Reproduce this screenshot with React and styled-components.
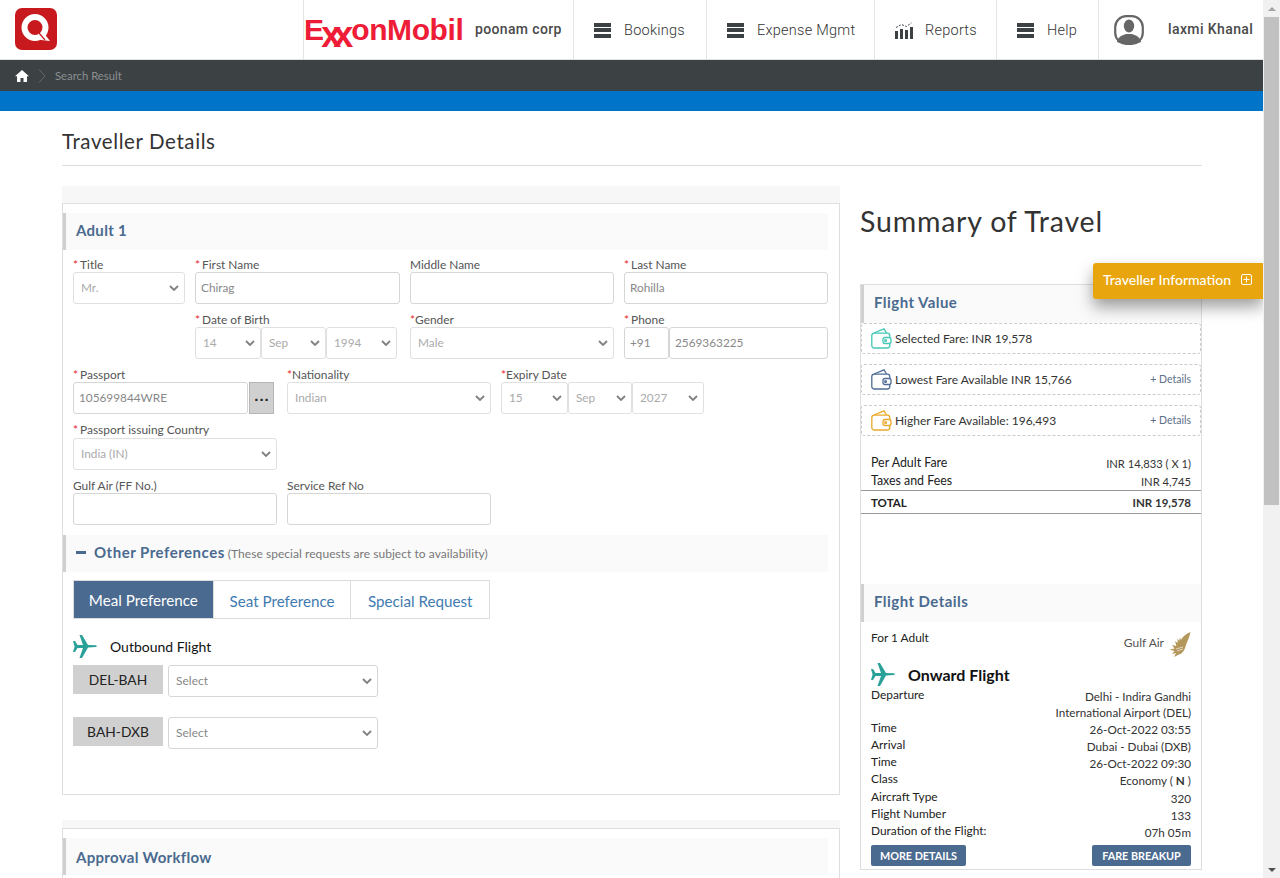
import React from "react";
import styled, { createGlobalStyle } from "styled-components";

const GlobalStyle = createGlobalStyle`
  html, body {
    margin: 0;
    padding: 0;
    height: 878px;
    overflow: hidden;
    background: #fff;
    font-family: "Lato", "Open Sans", sans-serif;
    color: #333;
  }
  * { box-sizing: border-box; }
`;

const chevron =
  "url(\"data:image/svg+xml,%3Csvg xmlns='http://www.w3.org/2000/svg' width='10' height='6' viewBox='0 0 10 6'%3E%3Cpath d='M1 1l4 4 4-4' fill='none' stroke='%23808080' stroke-width='1.8'/%3E%3C/svg%3E\")";

const Page = styled.div`
  display: flex;
  width: 1280px;
  height: 878px;
  overflow: hidden;
`;

const Main = styled.div`
  position: relative;
  width: 1263px;
  height: 878px;
  overflow: hidden;
`;

const Scrollbar = styled.div`
  width: 17px;
  height: 878px;
  background: #f1f1f1;
  display: flex;
  flex-direction: column;
  align-items: center;
`;

const ScrollArrow = styled.div`
  width: 17px;
  height: 17px;
  flex: none;
  display: flex;
  align-items: center;
  justify-content: center;
  margin-top: ${(p) => (p.$bottom ? "auto" : "0")};
  &::before {
    content: "";
    border-left: 4px solid transparent;
    border-right: 4px solid transparent;
    border-${(p) => (p.$bottom ? "top" : "bottom")}: 4px solid ${(p) => (p.$bottom ? "#505050" : "#a3a3a3")};
  }
`;

const ScrollThumb = styled.div`
  width: 15px;
  height: 488px;
  background: #c1c1c1;
`;

const Header = styled.header`
  display: flex;
  align-items: stretch;
  height: 60px;
  background: #fff;
  border-bottom: 1px solid #e2e2e2;
`;

const LogoSlot = styled.div`
  width: 303px;
  padding: 8px 0 0 15px;
`;

const BrandCell = styled.div`
  display: flex;
  align-items: center;
  width: 270px;
  border-left: 1px solid #e4e4e4;
`;

const ExxonText = styled.div`
  font-family: "Liberation Sans", Arial, sans-serif;
  font-weight: 700;
  font-size: 30px;
  letter-spacing: -0.4px;
  color: #ee1c36;
  width: 171px;
  white-space: nowrap;
  line-height: 1;
`;

const CrossX = styled.span`
  display: inline-block;
  margin: 0 ${(p) => p.$mr}px 0 ${(p) => p.$ml}px;
  transform: translateY(5px) scale(1.2);
`;

const CorpName = styled.span`
  font-family: "Roboto", sans-serif;
  font-size: 14px;
  font-weight: 500;
  letter-spacing: 0.35px;
  color: #4a4a4a;
  margin-top: -2px;
`;

const NavCell = styled.div`
  display: flex;
  align-items: center;
  width: ${(p) => p.$w}px;
  padding: 1px 0 0 ${(p) => p.$pl}px;
  gap: ${(p) => p.$gap}px;
  border-left: 1px solid #e4e4e4;
  font-family: "Roboto", sans-serif;
  font-size: 14.5px;
  font-weight: 300;
  letter-spacing: 0.25px;
  color: #333;
`;

const Burger = styled.span`
  display: flex;
  flex-direction: column;
  justify-content: space-between;
  width: 17px;
  height: 15px;
  span {
    display: block;
    height: 4px;
    background: #3c4144;
  }
`;

const UserName = styled.span`
  font-size: 14px;
  font-weight: 500;
  letter-spacing: 0.4px;
  color: #4a4a4a;
  margin-left: 24px;
  margin-top: -2px;
`;

const CrumbBar = styled.div`
  display: flex;
  align-items: center;
  height: 31px;
  padding-left: 15px;
  gap: 9px;
  background: #3c4144;
  font-size: 11.3px;
  color: #8b8f91;
`;

const BlueBar = styled.div`
  height: 20px;
  background: #0074c8;
`;

const Content = styled.main`
  padding: 0 61px 0 62px;
`;

const PageTitle = styled.h1`
  margin: 0;
  height: 55px;
  padding-top: 17px;
  border-bottom: 1px solid #dcdcdc;
  font-size: 20.5px;
  line-height: 26px;
  font-weight: 400;
  letter-spacing: 0.6px;
  color: #333;
`;

const Columns = styled.div`
  display: flex;
  gap: 20px;
  margin-top: 20px;
`;

const LeftCol = styled.div`
  width: 778px;
  flex: none;
`;

const RightCol = styled.div`
  width: 342px;
  flex: none;
`;

const CardStrip = styled.div`
  height: ${(p) => p.$h}px;
  background: #f7f7f7;
`;

const Card = styled.section`
  border: 1px solid #dedede;
  height: ${(p) => p.$h}px;
  padding-top: 9px;
  background: #fff;
  margin-bottom: 25px;
`;

const SectionHead = styled.div`
  display: flex;
  align-items: center;
  height: 37px;
  width: 765px;
  padding: 0 0 3px 10px;
  border-left: 3px solid #d0d0d0;
  background: #fafafa;
  font-size: 15px;
  font-weight: 700;
  letter-spacing: 0.3px;
  color: #4a6a8f;
`;

const ApprovalHead = styled(SectionHead)`
  padding-bottom: 0;
`;

const FormBody = styled.div`
  padding: 7px 0 0 10px;
`;

const FormRow = styled.div`
  display: flex;
  gap: 10px;
  margin-bottom: ${(p) => p.$mb ?? 8}px;
`;

const Field = styled.div`
  width: ${(p) => p.$w}px;
  flex: none;
`;

const Label = styled.label`
  display: block;
  height: ${(p) => p.$h ?? 15}px;
  font-size: 11.9px;
  line-height: 15px;
  color: #555;
  white-space: nowrap;
`;

const Req = styled.span`
  color: #e8262b;
  margin-right: ${(p) => p.$gap ?? 2}px;
`;

const Input = styled.input`
  display: block;
  width: ${(p) => p.$w ?? "100%"};
  height: 32px;
  padding: 0 5px 1px;
  border: 1px solid #d6d6d6;
  border-radius: 3px;
  background: #fff;
  font-family: inherit;
  font-size: 11.8px;
  color: #888;
  outline: none;
`;

const Select = styled.select`
  display: block;
  appearance: none;
  width: ${(p) => p.$w ?? "100%"};
  height: 32px;
  padding: 0 16px 1px 7px;
  border: 1px solid ${(p) => (p.$strong ? "#d6d6d6" : "#e0e0e0")};
  border-radius: 3px;
  background: #fff ${chevron} no-repeat right 5px center;
  font-family: inherit;
  font-size: ${(p) => (p.$strong ? "12px" : "11.8px")};
  color: ${(p) => (p.$strong ? "#888" : "#aaa")};
  outline: none;
`;

const Inline = styled.div`
  display: flex;
  gap: ${(p) => p.$gap ?? 1}px;
`;

const DotsButton = styled.button`
  width: 25px;
  height: 32px;
  padding: 0 0 5px 1px;
  flex: none;
  border: 1px solid #b5b5b5;
  background: #d0d0d0;
  color: #222;
  font-size: 15px;
  font-weight: 700;
  line-height: 1;
  letter-spacing: 1px;
  font-family: "Liberation Sans", sans-serif;
`;

const PrefHead = styled(SectionHead)`
  gap: 7px;
  margin-top: 10px;
  letter-spacing: 0.5px;
`;

const Minus = styled.span`
  width: 10px;
  height: 3px;
  margin-right: 1px;
  background: #4a6a8f;
`;

const PrefNote = styled.span`
  font-size: 12px;
  font-weight: 400;
  letter-spacing: 0.05px;
  color: #777;
  margin-left: -4px;
  margin-top: 2px;
`;

const Tabs = styled.div`
  display: flex;
  width: 417px;
  height: 39px;
  margin: 8px 0 0 10px;
  border: 1px solid #dcdcdc;
`;

const Tab = styled.div`
  display: flex;
  align-items: center;
  justify-content: center;
  width: ${(p) => p.$w}px;
  border-left: ${(p) => (p.$active ? "none" : "1px solid #dcdcdc")};
  background: ${(p) => (p.$active ? "#4a6a8f" : "#fff")};
  color: ${(p) => (p.$active ? "#fff" : "#3f7bb0")};
  font-size: 15.2px;
  padding-top: ${(p) => (p.$active ? 0 : 2)}px;
`;

const FlightTitle = styled.div`
  display: flex;
  align-items: center;
  height: 46px;
  margin-left: 10px;
  padding-top: 8px;
  gap: 13px;
  font-size: 14px;
  color: #111;
`;

const RouteRow = styled.div`
  display: flex;
  gap: 5px;
  margin: 0 0 20px 10px;
`;

const RouteTag = styled.div`
  display: flex;
  align-items: center;
  justify-content: center;
  width: 90px;
  height: 29px;
  padding-bottom: 1px;
  background: #d0d0d0;
  color: #222;
  font-size: 13.8px;
`;

const SummaryTitle = styled.h2`
  margin: 0;
  height: 98px;
  padding-top: 15px;
  font-size: 28.5px;
  line-height: 40px;
  font-weight: 400;
  color: #333;
  letter-spacing: 0.8px;
`;

const SummaryCard = styled.section`
  border: 1px solid #dedede;
  height: 586px;
  background: #fff;
`;

const SummaryHead = styled.div`
  display: flex;
  align-items: center;
  height: 38px;
  padding: 0 0 4px 10px;
  border-left: 3px solid #d0d0d0;
  background: #fafafa;
  font-size: 15px;
  font-weight: 700;
  letter-spacing: 0.45px;
  color: #4a6a8f;
`;

const FareList = styled.div`
  display: flex;
  flex-direction: column;
  gap: 10px;
`;

const FareBox = styled.div`
  display: flex;
  align-items: center;
  gap: 3px;
  height: 31px;
  padding: 0 9px 1px 9px;
  border: 1px dashed #ccc;
  border-radius: 3px;
  font-size: 12px;
  color: #333;
`;

const DetailsLink = styled.span`
  margin-left: auto;
  font-size: 10.5px;
  color: #5b6f8a;
`;

const AmountTable = styled.div`
  margin-top: 17px;
  font-size: 12.4px;
  color: #222;
`;

const AmountRow = styled.div`
  display: flex;
  justify-content: space-between;
  align-items: center;
  height: ${(p) => p.$h}px;
  padding: ${(p) => (p.$bold ? "1px" : "0")} 10px 0;
  border-bottom: ${(p) => (p.$line ? "1px solid #999" : "none")};
  font-weight: ${(p) => (p.$bold ? 700 : 400)};
  font-size: ${(p) => (p.$bold ? "11.5px" : "inherit")};
`;

const AmountValue = styled.span`
  color: #333;
  font-size: ${(p) => (p.$big ? "11.5px" : "11.2px")};
  padding-top: ${(p) => (p.$big ? 0 : 2)}px;
`;

const DetailsSection = styled.div`
  margin-top: 70px;
`;

const DetailsBody = styled.div`
  padding: 0 10px;
  font-size: 11.9px;
  color: #222;
`;

const CarrierRow = styled.div`
  display: flex;
  justify-content: space-between;
  height: 39px;
  padding-top: 8px;
`;

const Carrier = styled.div`
  display: flex;
  align-items: flex-start;
  gap: 5px;
  color: #555;
  font-size: 12px;
  svg {
    margin-top: 2px;
  }
`;

const CarrierName = styled.span`
  padding-top: 5px;
`;

const OnwardTitle = styled.div`
  display: flex;
  align-items: center;
  gap: 13px;
  height: 26px;
  padding-top: 1px;
  font-size: 16px;
  font-weight: 700;
  color: #111;
`;

const InfoRow = styled.div`
  display: flex;
  justify-content: space-between;
  min-height: ${(p) => p.$h ?? 17}px;
  line-height: 16px;
`;

const InfoValue = styled.span`
  text-align: right;
  padding-top: 1px;
  max-width: 150px;
  font-size: 11.7px;
  color: #333;
`;

const ActionRow = styled.div`
  display: flex;
  justify-content: space-between;
  margin-top: 5px;
`;

const ActionButton = styled.button`
  height: 21px;
  width: ${(p) => p.$w}px;
  border: none;
  border-radius: 2px;
  background: #4a6a8f;
  color: #fff;
  font-family: inherit;
  font-size: 10.8px;
  font-weight: 700;
  padding: 0;
`;

const TravellerTab = styled.div`
  position: absolute;
  right: 0;
  top: 263px;
  display: flex;
  align-items: center;
  gap: 10px;
  width: 170px;
  height: 36px;
  padding: 0 0 3px 10px;
  border-radius: 3px 0 0 3px;
  background: #e8a50e;
  box-shadow: 0 8px 16px rgba(0, 0, 0, 0.38);
  color: #fff;
  font-size: 14px;
  font-weight: 500;
`;

const QLogo = () => (
  <svg width="42" height="42" viewBox="0 0 42 42">
    <rect width="42" height="42" rx="7" fill="#c8191f" />
    <circle cx="20" cy="19.5" r="10.5" fill="none" stroke="#fff" strokeWidth="6" />
    <path d="M23 26 L28 24 L35 33 L26 32 Z" fill="#fff" />
    <path d="M24 25 L30 32" stroke="#c8191f" strokeWidth="1.2" />
  </svg>
);

const Hamburger = () => (
  <Burger>
    <span />
    <span />
    <span />
  </Burger>
);

const ReportsIcon = () => (
  <svg width="18" height="17" viewBox="0 0 18 17" fill="#3c4144">
    <rect x="0" y="9" width="3" height="8" />
    <rect x="5" y="7" width="3" height="10" />
    <rect x="10" y="8" width="3" height="9" />
    <rect x="15" y="5" width="3" height="12" />
    <path d="M1 5.5 L6.5 2.5 L11.5 4.5 L16.5 0.8" fill="none" stroke="#3c4144" strokeWidth="1" strokeDasharray="2 1.4" />
  </svg>
);

const UserIcon = () => (
  <svg width="30" height="30" viewBox="0 0 30 30">
    <rect x="1.2" y="1.2" width="27.6" height="27.6" rx="11" fill="#fff" stroke="#666" strokeWidth="2.2" />
    <ellipse cx="15" cy="11" rx="5.2" ry="6.5" fill="#666" />
    <path d="M3 27 C4 21 9 20.5 12 19 L18 19 C21 20.5 26 21 27 27 C24 29 6 29 3 27 Z" fill="#666" />
  </svg>
);

const HomeIcon = () => (
  <svg width="14" height="12" viewBox="0 0 14 12" fill="#fff">
    <path d="M7 0 L14 6.2 L12 6.2 L12 12 L8.5 12 L8.5 8 L5.5 8 L5.5 12 L2 12 L2 6.2 L0 6.2 Z" />
  </svg>
);

const CrumbChevron = () => (
  <svg width="8" height="14" viewBox="0 0 8 14" fill="none" stroke="#666a6c">
    <path d="M1 0.5 L7 7 L1 13.5" />
  </svg>
);

const Plane = () => (
  <svg width="24" height="23" viewBox="0 0 24 23" fill="#2aa198" style={{ flex: "none" }}>
    <path d="M0 6 L2 6 L4.5 10 L10 10 L6.5 0 L9 0 L15 10 L23 10.2 C24 10.8 24 11.6 23 12 L15 12.4 L9 23 L6.5 23 L10 13 L4.5 13 L2 17 L0 17 L1.6 11.5 Z" />
  </svg>
);

const Wallet = ({ color }) => (
  <svg width="21" height="21" viewBox="0 0 21 21" fill="none" stroke={color} strokeWidth="1.3" style={{ flex: "none" }}>
    <rect x="0.8" y="5.2" width="18" height="14.8" rx="2.5" />
    <path d="M3 5 L13 0.8 L15.5 5" />
    <rect x="12" y="9.5" width="8" height="6" rx="2" fill="#fff" />
    <circle cx="14.6" cy="12.5" r="0.9" />
  </svg>
);

const GulfFalcon = () => (
  <svg width="22" height="25" viewBox="0 0 22 25" fill="#b4975a">
    <path d="M21.5 0 C17 2 13.5 4.5 12 8 L11 5.5 L10.2 9 L8.5 6.5 L8.6 11 L6 9 L7.4 14 L3 13 L5.6 16.4 L0.5 17.5 L5.5 19 L3 22 L7 21 L5 25 L10 22.5 C14 21.5 16 17 17 13 C18.5 9 20.5 5 21.5 0 Z" />
    <path d="M7 17 L14 15 M8 19 L14 17" stroke="#fff" strokeWidth="0.6" fill="none" />
  </svg>
);

const PlusBox = () => (
  <svg width="11" height="11" viewBox="0 0 11 11" fill="none" stroke="#fff">
    <rect x="0.5" y="0.5" width="10" height="10" rx="1.5" />
    <path d="M5.5 2.5 V8.5 M2.5 5.5 H8.5" />
  </svg>
);

const Pick = ({ value, w, strong }) => (
  <Select $w={w} $strong={strong} defaultValue={value}>
    <option>{value}</option>
  </Select>
);

const fares = [
  { color: "#44c7b5", label: "Selected Fare: INR 19,578" },
  { color: "#4f6d96", label: "Lowest Fare Available INR 15,766", details: true },
  { color: "#eaa92c", label: "Higher Fare Available: 196,493", details: true },
];

const flightInfo = [
  ["Time", "26-Oct-2022 03:55"],
  ["Arrival", "Dubai - Dubai (DXB)"],
  ["Time", "26-Oct-2022 09:30"],
];

const flightInfoTail = [
  ["Aircraft Type", "320"],
  ["Flight Number", "133"],
  ["Duration of the Flight:", "07h 05m"],
];

const App = () => (
  <Page>
    <GlobalStyle />
    <Main>
      <Header>
        <LogoSlot>
          <QLogo />
        </LogoSlot>
        <BrandCell>
          <ExxonText>
            E<CrossX $ml={-1} $mr={-4}>x</CrossX>
            <CrossX $ml={0} $mr={0}>x</CrossX>onMobil
          </ExxonText>
          <CorpName>poonam corp</CorpName>
        </BrandCell>
        <NavCell $w={133} $pl={20} $gap={13}>
          <Hamburger />
          Bookings
        </NavCell>
        <NavCell $w={168} $pl={20} $gap={13}>
          <Hamburger />
          Expense Mgmt
        </NavCell>
        <NavCell $w={122} $pl={20} $gap={12}>
          <ReportsIcon />
          Reports
        </NavCell>
        <NavCell $w={102} $pl={20} $gap={13}>
          <Hamburger />
          Help
        </NavCell>
        <NavCell $w={165} $pl={15} $gap={0}>
          <UserIcon />
          <UserName>laxmi Khanal</UserName>
        </NavCell>
      </Header>
      <CrumbBar>
        <HomeIcon />
        <CrumbChevron />
        Search Result
      </CrumbBar>
      <BlueBar />
      <Content>
        <PageTitle>Traveller Details</PageTitle>
        <Columns>
          <LeftCol>
            <CardStrip $h={17} />
            <Card $h={592}>
              <SectionHead>Adult 1</SectionHead>
              <FormBody>
                <FormRow>
                  <Field $w={112}>
                    <Label><Req>*</Req>Title</Label>
                    <Pick value="Mr." />
                  </Field>
                  <Field $w={205}>
                    <Label><Req>*</Req>First Name</Label>
                    <Input defaultValue="Chirag" />
                  </Field>
                  <Field $w={204}>
                    <Label>Middle Name</Label>
                    <Input />
                  </Field>
                  <Field $w={204}>
                    <Label><Req>*</Req>Last Name</Label>
                    <Input defaultValue="Rohilla" />
                  </Field>
                </FormRow>
                <FormRow>
                  <Field $w={112} />
                  <Field $w={205}>
                    <Label><Req>*</Req>Date of Birth</Label>
                    <Inline $gap={0}>
                      <Pick value="14" w="66px" />
                      <Pick value="Sep" w="65px" />
                      <Pick value="1994" w="71px" />
                    </Inline>
                  </Field>
                  <Field $w={204}>
                    <Label><Req $gap={0}>*</Req>Gender</Label>
                    <Pick value="Male" />
                  </Field>
                  <Field $w={204}>
                    <Label><Req>*</Req>Phone</Label>
                    <Inline $gap={0}>
                      <Input $w="45px" defaultValue="+91" />
                      <Input $w="159px" defaultValue="2569363225" />
                    </Inline>
                  </Field>
                </FormRow>
                <FormRow>
                  <Field $w={204}>
                    <Label><Req>*</Req>Passport</Label>
                    <Inline>
                      <Input $w="175px" defaultValue="105699844WRE" />
                      <DotsButton>...</DotsButton>
                    </Inline>
                  </Field>
                  <Field $w={204}>
                    <Label><Req $gap={0}>*</Req>Nationality</Label>
                    <Pick value="Indian" />
                  </Field>
                  <Field $w={204}>
                    <Label><Req $gap={0}>*</Req>Expiry Date</Label>
                    <Inline $gap={0}>
                      <Pick value="15" w="67px" />
                      <Pick value="Sep" w="64px" />
                      <Pick value="2027" w="72px" />
                    </Inline>
                  </Field>
                </FormRow>
                <FormRow>
                  <Field $w={204}>
                    <Label $h={16}><Req>*</Req>Passport issuing Country</Label>
                    <Pick value="India (IN)" />
                  </Field>
                </FormRow>
                <FormRow $mb={0}>
                  <Field $w={204}>
                    <Label>Gulf Air (FF No.)</Label>
                    <Input />
                  </Field>
                  <Field $w={204}>
                    <Label>Service Ref No</Label>
                    <Input />
                  </Field>
                </FormRow>
              </FormBody>
              <PrefHead>
                <Minus />
                Other Preferences
                <PrefNote>(These special requests are subject to availability)</PrefNote>
              </PrefHead>
              <Tabs>
                <Tab $active $w={139}>Meal Preference</Tab>
                <Tab $w={138}>Seat Preference</Tab>
                <Tab $w={139}>Special Request</Tab>
              </Tabs>
              <FlightTitle>
                <Plane />
                Outbound Flight
              </FlightTitle>
              <RouteRow>
                <RouteTag>DEL-BAH</RouteTag>
                <Pick value="Select" w="210px" strong />
              </RouteRow>
              <RouteRow>
                <RouteTag>BAH-DXB</RouteTag>
                <Pick value="Select" w="210px" strong />
              </RouteRow>
            </Card>
            <CardStrip $h={8} />
            <Card $h={60}>
              <ApprovalHead>Approval Workflow</ApprovalHead>
            </Card>
          </LeftCol>
          <RightCol>
            <SummaryTitle>Summary of Travel</SummaryTitle>
            <SummaryCard>
              <SummaryHead>Flight Value</SummaryHead>
              <FareList>
                {fares.map((fare) => (
                  <FareBox key={fare.label}>
                    <Wallet color={fare.color} />
                    {fare.label}
                    {fare.details && <DetailsLink>+ Details</DetailsLink>}
                  </FareBox>
                ))}
              </FareList>
              <AmountTable>
                <AmountRow $h={18}>Per Adult Fare<AmountValue>INR 14,833 ( X 1)</AmountValue></AmountRow>
                <AmountRow $h={20} $line>Taxes and Fees<AmountValue>INR 4,745</AmountValue></AmountRow>
                <AmountRow $h={23} $line $bold>TOTAL<AmountValue $big>INR 19,578</AmountValue></AmountRow>
              </AmountTable>
              <DetailsSection>
                <SummaryHead>Flight Details</SummaryHead>
                <DetailsBody>
                  <CarrierRow>
                    <span>For 1 Adult</span>
                    <Carrier>
                      <CarrierName>Gulf Air</CarrierName>
                      <GulfFalcon />
                    </Carrier>
                  </CarrierRow>
                  <OnwardTitle>
                    <Plane />
                    Onward Flight
                  </OnwardTitle>
                  <InfoRow>
                    <span>Departure</span>
                    <InfoValue>Delhi - Indira Gandhi International Airport (DEL)</InfoValue>
                  </InfoRow>
                  {flightInfo.map(([name, value]) => (
                    <InfoRow key={name + value}>
                      <span>{name}</span>
                      <InfoValue>{value}</InfoValue>
                    </InfoRow>
                  ))}
                  <InfoRow $h={18}>
                    <span>Class</span>
                    <InfoValue>Economy ( <b>N</b> )</InfoValue>
                  </InfoRow>
                  {flightInfoTail.map(([name, value]) => (
                    <InfoRow key={name}>
                      <span>{name}</span>
                      <InfoValue>{value}</InfoValue>
                    </InfoRow>
                  ))}
                  <ActionRow>
                    <ActionButton $w={95}>MORE DETAILS</ActionButton>
                    <ActionButton $w={99}>FARE BREAKUP</ActionButton>
                  </ActionRow>
                </DetailsBody>
              </DetailsSection>
            </SummaryCard>
          </RightCol>
        </Columns>
      </Content>
      <TravellerTab>
        Traveller Information
        <PlusBox />
      </TravellerTab>
    </Main>
    <Scrollbar>
      <ScrollArrow />
      <ScrollThumb />
      <ScrollArrow $bottom />
    </Scrollbar>
  </Page>
);

export default App;
